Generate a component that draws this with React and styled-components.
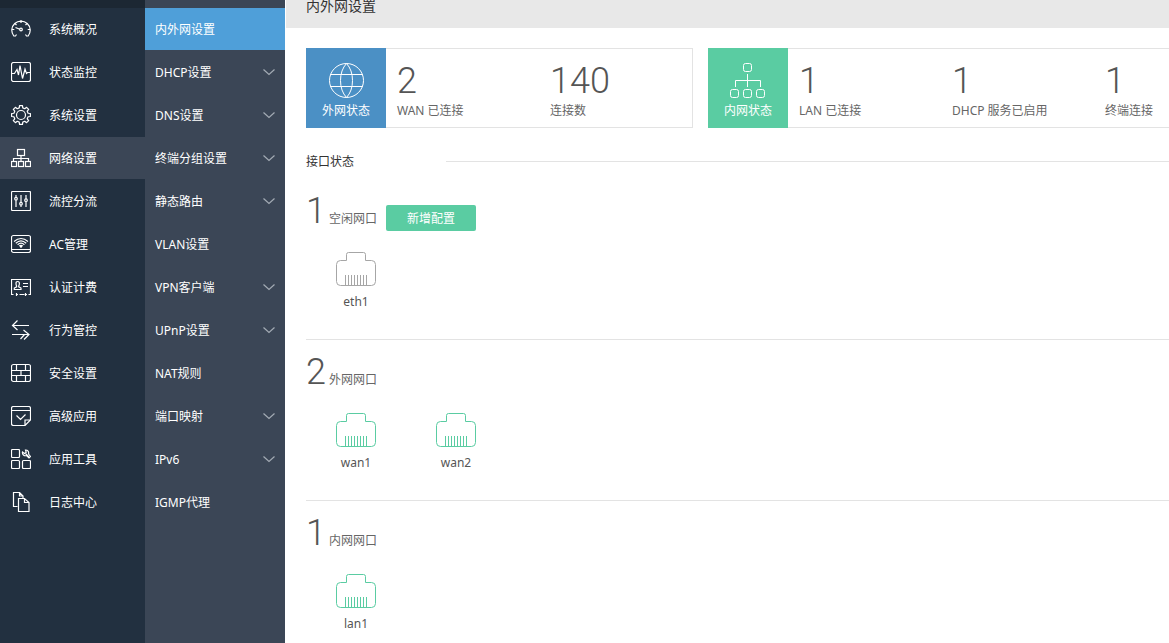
import React from 'react';
import styled, { createGlobalStyle } from 'styled-components';

const GlobalStyle = createGlobalStyle`
  *, *::before, *::after { box-sizing: border-box; }
  body {
    margin: 0;
    background: #fff;
    color: #333;
    font-family: "Noto Sans", "Noto Sans CJK SC", sans-serif;
    font-size: 12px;
    line-height: 16px;
  }
`;

const Shell = styled.div`
  display: flex;
  height: 100vh;
  overflow: hidden;
`;

const Sidebar = styled.nav`
  flex: none;
  width: 145px;
  border-top: 8px solid #1c2733;
  background: #223040;
`;

const SubSidebar = styled.nav`
  flex: none;
  width: 140px;
  padding-top: 8px;
  background: #3b4656;
`;

const Menu = styled.ul`
  display: flex;
  flex-direction: column;
  gap: 1px;
  margin: 0;
  padding: 0;
  list-style: none;
`;

const MainLink = styled.a`
  display: flex;
  align-items: center;
  gap: 18px;
  height: 42px;
  padding-left: 11px;
  color: #fff;
  text-decoration: none;
  background: ${(p) => (p.$active ? '#3b4656' : 'transparent')};
`;

const SubLink = styled.a`
  display: flex;
  align-items: center;
  justify-content: space-between;
  height: 42px;
  padding: 0 10px;
  color: #fff;
  text-decoration: none;
  background: ${(p) => (p.$active ? '#4f9fd9' : 'transparent')};
`;

const MenuLabel = styled.span`
  padding-top: 2px;
`;

const LineIcon = styled.svg`
  flex: none;
  display: block;
  fill: none;
  stroke: ${(p) => p.$color || '#fff'};
  stroke-width: ${(p) => p.$weight || 1};
`;

const Main = styled.main`
  flex: 1;
  min-width: 0;
  margin-left: 1px;
  overflow: hidden;
`;

const Header = styled.header`
  padding: 0 20px 16px;
  background: #e8e8e8;
`;

const Title = styled.h1`
  margin: 0;
  font-size: 14px;
  font-weight: 400;
  line-height: 12px;
`;

const Content = styled.div`
  padding: 20px 0 0 20px;
`;

const Cards = styled.div`
  display: flex;
  gap: 15px;
`;

const Card = styled.section`
  flex: none;
  display: flex;
  height: 80px;
`;

const Badge = styled.div`
  display: flex;
  flex-direction: column;
  align-items: center;
  gap: 5px;
  width: 80px;
  padding-top: 14px;
  color: #fff;
  background: ${(p) => p.$color};
`;

const Stats = styled.div`
  display: flex;
  border: 1px solid #e3e3e3;
  border-left: 0;
`;

const Stat = styled.div`
  display: flex;
  flex-direction: column;
  gap: 2px;
  width: 153px;
  padding: 12px 0 0 11px;
  color: #666;
`;

const Figure = styled.span`
  display: block;
  color: #555;
  font-family: Roboto, sans-serif;
  font-size: 36px;
  font-weight: 300;
  line-height: 40px;
`;

const Divider = styled.h2`
  display: flex;
  align-items: center;
  height: 16px;
  margin: 25px 0 10px;
  font-size: 12px;
  font-weight: 400;

  span {
    width: 140px;
    padding-top: 2px;
  }

  &::after {
    content: "";
    flex: 1;
    height: 1px;
    background: #e3e3e3;
  }
`;

const Group = styled.section`
  height: 161px;
  padding-top: 12px;
  border-bottom: 1px solid #e3e3e3;
`;

const GroupHead = styled.div`
  display: flex;
  height: 42px;
  color: #666;
`;

const GroupName = styled.h3`
  margin: 20px 9px 0 3px;
  font-size: 12px;
  font-weight: 400;
`;

const AddButton = styled.button`
  width: 90px;
  height: 26px;
  margin-top: 14px;
  padding: 2px 0 0;
  border: 0;
  border-radius: 2px;
  color: #fff;
  font: inherit;
  background: #5acca2;
`;

const Ports = styled.ul`
  display: flex;
  margin: 0;
  padding: 19px 0 0;
  list-style: none;
`;

const Port = styled.li`
  display: flex;
  flex-direction: column;
  align-items: center;
  gap: 8px;
  width: 100px;
  color: #555;
`;

const box = (x, y, w, h, r = 1) => <rect x={x} y={y} width={w} height={h} rx={r} />;

// Outline of a cog with eight teeth, centred in a 20 by 20 box.
const cogPath = () => {
  const points = [];
  for (let tooth = 0; tooth < 8; tooth += 1) {
    [[-14, 7.3], [-9, 9.5], [9, 9.5], [14, 7.3]].forEach(([offset, radius]) => {
      const angle = ((tooth * 45 + offset) * Math.PI) / 180;
      points.push(`${10 + radius * Math.cos(angle)} ${10 + radius * Math.sin(angle)}`);
    });
  }
  return `M${points.join('L')}z`;
};

const drawings = {
  gauge: (
    <>
      <path d="M5.5 15.500 4.500 17H2.800A9.200 9.200 0 1 1 17.200 17H15.500L14.500 15.500M10 1v3M3.800 4.300l1.700 1.700M16.200 4.300l-1.700 1.700M.8 10.500h2.500M16.700 10.500h2.500M4.500 8.500l4.300 1.700" />
      <circle cx="10" cy="10.500" r="1.300" />
    </>
  ),
  monitor: (
    <>
      {box(0.5, 0.5, 19, 19, 2)}
      <path d="M1 11.500h2.500L6 7.500l1.500 5.500L9 3.500l2.500 13L14 7l1.500 4.500 1-1H19" />
    </>
  ),
  gear: (
    <>
      <path d={cogPath()} strokeLinejoin="round" />
      <circle cx="10" cy="10" r="4.500" />
    </>
  ),
  network: (
    <>
      {box(6.5, 1.5, 7, 6, 0)}
      {box(0.5, 13.5, 5, 5, 0)}
      {box(7.5, 13.5, 5, 5, 0)}
      {box(14.5, 13.5, 5, 5, 0)}
      <path d="M10 8v5.500M2.500 13.500v-3h15v3" />
    </>
  ),
  sliders: (
    <>
      {box(0.5, 0.5, 19, 19, 1)}
      <path d="M5 4v2.500M5 9v7M10 4v7.500M10 14v2M15 4v4M15 10.500V16" />
      <circle cx="5" cy="7.700" r="1.300" />
      <circle cx="10" cy="12.700" r="1.300" />
      <circle cx="15" cy="9.200" r="1.300" />
    </>
  ),
  wifi: (
    <>
      {box(0.5, 1.5, 19, 17, 2)}
      <path d="M1 15.500h18M3 7.500Q10 1.500 17 7.500M4.800 9.200Q10 4.500 15.200 9.200M6.600 10.800Q10 7.500 13.400 10.800M8.300 12Q10 10.600 11.700 12" />
      <circle cx="10" cy="12.500" r=".6" />
    </>
  ),
  card: (
    <>
      <path d="M2.500 17.500h-2v-15h19v15h-2M5 17.500h2M8.500 17.500h5M15 17.500h1M5.500 16v3M14.500 16v3M12 6.500h5M12 9.500h5" />
      <path d="M5 6.500q0-2 1.700-2t1.700 2q0 1.500-.7 2.500v.800l2.300 1.200v1.500H3.300V11L5.600 9.800V9Q5 8 5 6.500z" />
    </>
  ),
  arrows: <path d="M6.500.5 1.500 5.500l5 4.500M1.500 5.500H18M1 14.500h17M12.500 10l5.500 4.500-5 5M9.500 19l4-4.500" />,
  wall: (
    <>
      {box(0.5, 1.5, 19, 17, 2)}
      <path d="M1 7.500h18M1 12.500h18M5.500 2v5.500M14.500 2v5.500M10 7.500v5M5.500 12.500v6M14.500 12.500v6" />
    </>
  ),
  check: (
    <path d="M14 19.500H2.500q-2 0-2-2v-15q0-2 2-2h15q2 0 2 2V14l-5.500 5.500V14h5.500M1 4.500h18M5.500 9.500l4 4 5-5" />
  ),
  tools: (
    <>
      {box(0.5, 0.5, 8, 8)}
      {box(0.5, 11.5, 8, 8)}
      {box(11.5, 11.5, 8, 8)}
      <path d="M14.500 1a3 3 0 0 1 3 4l2 2.500-1.500 1.500-2.500-2.500a3 3 0 0 1-4-3.500l2 1.500 1.700-1.300z" />
      <path d="M14.500 4.500l3.500 3.500" />
    </>
  ),
  files: (
    <path d="M6.500 14.500h-4V.5h6l3.500 3.500v2M8.500.5V4H12M7.500 6.500h6l4.500 4v9H7.500zM13.500 6.500v4H18" />
  ),
};

const mainMenu = [
  ['gauge', '系统概况'],
  ['monitor', '状态监控'],
  ['gear', '系统设置'],
  ['network', '网络设置'],
  ['sliders', '流控分流'],
  ['wifi', 'AC管理'],
  ['card', '认证计费'],
  ['arrows', '行为管控'],
  ['wall', '安全设置'],
  ['check', '高级应用'],
  ['tools', '应用工具'],
  ['files', '日志中心'],
];

const subMenu = [
  ['内外网设置', false],
  ['DHCP设置', true],
  ['DNS设置', true],
  ['终端分组设置', true],
  ['静态路由', true],
  ['VLAN设置', false],
  ['VPN客户端', true],
  ['UPnP设置', true],
  ['NAT规则', false],
  ['端口映射', true],
  ['IPv6', true],
  ['IGMP代理', false],
];

const groups = [
  { count: 1, name: '空闲网口', color: '#a6a6a6', ports: ['eth1'], canAdd: true },
  { count: 2, name: '外网网口', color: '#5acca2', ports: ['wan1', 'wan2'] },
  { count: 1, name: '内网网口', color: '#5acca2', ports: ['lan1'] },
];

const Chevron = () => (
  <LineIcon width="12" height="8" viewBox="0 0 12 8" $color="#a3abb4" $weight={1.2} aria-hidden="true">
    <path d="M.5 1.500 6 6.500l5.500-5" />
  </LineIcon>
);

const PortIcon = ({ color }) => (
  <LineIcon width="40" height="34" viewBox="0 0 40 34" $color={color} aria-hidden="true">
    <path d="M4.500 8.500h6v-6q0-2 2-2h15q2 0 2 2v6h6q4 0 4 4v17q0 4-4 4h-31q-4 0-4-4v-17q0-4 4-4z" />
    <path d="M9.500 23v10M12.500 23v10M15.500 23v10M18.500 23v10M21.500 23v10M24.500 23v10M27.500 23v10M30.500 23v10" />
  </LineIcon>
);

const GlobeIcon = () => (
  <LineIcon width="36" height="36" viewBox="0 0 36 36" aria-hidden="true">
    <circle cx="18.500" cy="18.500" r="17" />
    <path d="M18.500 1.500Q12.500 8 12.500 18.500t6 17M18.500 1.500q6 6.500 6 17t-6 17M2.500 12.500h32M2.500 24.500h32" />
  </LineIcon>
);

const TreeIcon = () => (
  <LineIcon width="36" height="36" viewBox="0 0 36 36" aria-hidden="true">
    {box(13.5, 1.5, 8, 8, 2)}
    {box(0.5, 27.5, 8, 8, 2)}
    {box(13.5, 27.5, 8, 8, 2)}
    {box(26.5, 27.5, 8, 8, 2)}
    <path d="M17.500 12v13M5.500 25v-6.500h25V25" />
  </LineIcon>
);

const StatusCard = ({ color, icon, label, stats }) => (
  <Card>
    <Badge $color={color}>
      {icon}
      <span>{label}</span>
    </Badge>
    <Stats>
      {stats.map(([value, name]) => (
        <Stat key={name}>
          <Figure>{value}</Figure>
          <span>{name}</span>
        </Stat>
      ))}
    </Stats>
  </Card>
);

export default function App() {
  return (
    <Shell>
      <GlobalStyle />
      <Sidebar aria-label="主菜单">
        <Menu>
          {mainMenu.map(([icon, label]) => (
            <li key={label}>
              <MainLink href="#" $active={icon === 'network'}>
                <LineIcon width="20" height="20" viewBox="0 0 20 20" $weight={1.2} aria-hidden="true">
                  {drawings[icon]}
                </LineIcon>
                <MenuLabel>{label}</MenuLabel>
              </MainLink>
            </li>
          ))}
        </Menu>
      </Sidebar>
      <SubSidebar aria-label="网络设置">
        <Menu>
          {subMenu.map(([label, expandable], i) => (
            <li key={label}>
              <SubLink href="#" $active={i === 0}>
                <MenuLabel>{label}</MenuLabel>
                {expandable && <Chevron />}
              </SubLink>
            </li>
          ))}
        </Menu>
      </SubSidebar>
      <Main>
        <Header>
          <Title>内外网设置</Title>
        </Header>
        <Content>
          <Cards>
            <StatusCard
              color="#4b90c5"
              icon={<GlobeIcon />}
              label="外网状态"
              stats={[['2', 'WAN 已连接'], ['140', '连接数']]}
            />
            <StatusCard
              color="#5acca2"
              icon={<TreeIcon />}
              label="内网状态"
              stats={[['1', 'LAN 已连接'], ['1', 'DHCP 服务已启用'], ['1', '终端连接']]}
            />
          </Cards>
          <Divider><span>接口状态</span></Divider>
          {groups.map((g) => (
            <Group key={g.name}>
              <GroupHead>
                <Figure>{g.count}</Figure>
                <GroupName>{g.name}</GroupName>
                {g.canAdd && <AddButton type="button">新增配置</AddButton>}
              </GroupHead>
              <Ports>
                {g.ports.map((name) => (
                  <Port key={name}>
                    <PortIcon color={g.color} />
                    {name}
                  </Port>
                ))}
              </Ports>
            </Group>
          ))}
        </Content>
      </Main>
    </Shell>
  );
}
